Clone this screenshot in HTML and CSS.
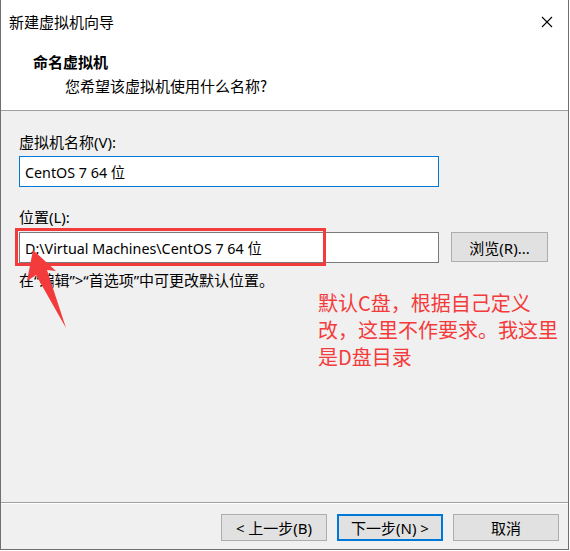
FILE: index.html
```html
<!DOCTYPE html>
<html lang="zh-CN">
<head>
    <meta charset="UTF-8">
    <meta name="viewport" content="width=device-width, initial-scale=1.0">
    <title>新建虚拟机向导</title>
    <link rel="stylesheet" href="styles.css">
</head>
<body>
    <div class="wizard">
        <div class="title-bar">
            <span class="title-text">新建虚拟机向导</span>
            <svg class="close-btn" width="12" height="12" viewBox="0 0 12 12">
                <path d="M1 1 L11 11 M11 1 L1 11" stroke="#000" stroke-width="1.1" fill="none"/>
            </svg>
        </div>
        <div class="wizard-header">
            <div class="step-title">命名虚拟机</div>
            <div class="step-desc">您希望该虚拟机使用什么名称?</div>
        </div>

        <div class="wizard-body">
            <label class="field-label" for="vm-name">虚拟机名称(V):</label>
            <input class="text-input focused" id="vm-name" type="text" value="CentOS 7 64 位">

            <label class="field-label second" for="vm-path">位置(L):</label>
            <div class="path-row">
                <input class="text-input" id="vm-path" type="text" value="D:\Virtual Machines\CentOS 7 64 位">
                <button class="btn browse-btn">浏览(R)...</button>
            </div>
            <div class="hint">在“编辑”>“首选项”中可更改默认位置。</div>

            <!-- 截图上的标注 -->
            <div class="mark-box"></div>
            <svg class="mark-arrow" width="80" height="100" viewBox="0 0 80 100">
                <polygon points="32,250 55,271 46,270 65,328 35,275 26,281" transform="translate(0,-240)" fill="#f33b3b"/>
            </svg>
            <div class="mark-note">默认C盘，根据自己定义<br>改，这里不作要求。我这里<br>是D盘目录</div>
        </div>

        <div class="wizard-footer">
            <button class="btn">&lt; 上一步(B)</button>
            <button class="btn default">下一步(N) &gt;</button>
            <button class="btn">取消</button>
        </div>
    </div>
</body>
</html>
```

FILE: styles.css
```css
* {
    box-sizing: border-box;
}
body {
    margin: 0;
    background: #fff;
    font-family: "Noto Sans", "Noto Sans CJK SC", sans-serif;
    font-size: 15px;
    color: #000;
}
.wizard {
    width: 569px;
    height: 550px;
    border: 1px solid #6f6f6f;
    border-top: none;
    display: flex;
    flex-direction: column;
    position: relative;
}
.title-bar {
    height: 44px;
    display: flex;
    align-items: center;
    justify-content: space-between;
    padding: 0 15px 0 8px;
    background: #fff;
}
.title-text {
    font-family: "Noto Sans CJK SC", sans-serif;
    line-height: 20px;
}
.close-btn {
    display: block;
}
.wizard-header {
    background: #fff;
    padding: 8px 0 0 32px;
    height: 67px;
    border-bottom: 1px solid #a0a0a0;
}
.step-title {
    font-family: "Noto Sans CJK SC", sans-serif;
    font-weight: bold;
    line-height: 20px;
}
.step-desc {
    font-family: "Noto Sans CJK SC", sans-serif;
    line-height: 20px;
    margin-top: 4px;
    padding-left: 32px;
}
.wizard-body {
    flex: 1;
    background: #f0f0f0;
    padding: 21px 0 0 18px;
    display: flex;
    flex-direction: column;
    align-items: flex-start;
}
.field-label {
    line-height: 20px;
    margin-bottom: 4px;
}
.field-label.second {
    margin-top: 20px;
    margin-bottom: 5px;
}
.text-input {
    width: 420px;
    height: 31px;
    border: 1px solid #7a7a7a;
    background: #fff;
    padding: 0 5px;
    font-family: inherit;
    font-size: 14.3px;
    color: #000;
    outline: none;
}
.text-input.focused {
    border-color: #0078d7;
}
.path-row {
    display: flex;
    gap: 12px;
    align-items: center;
}
.btn {
    height: 27px;
    width: 106px;
    border: 1px solid #adadad;
    background: #e1e1e1;
    font: inherit;
    color: #000;
    padding: 0;
}
.btn.default {
    border: 2px solid #0078d7;
}
.browse-btn {
    width: 97px;
    height: 30px;
    margin-top: -1px;
}
.hint {
    margin-top: 7px;
    line-height: 20px;
}
.mark-box {
    position: absolute;
    left: 14px;
    top: 228px;
    width: 311px;
    height: 38px;
    border: 3px solid #f33b3b;
}
.mark-arrow {
    position: absolute;
    left: 0;
    top: 240px;
}
.mark-note {
    position: absolute;
    left: 317px;
    top: 289px;
    font-family: "Noto Sans CJK SC", sans-serif;
    font-size: 20px;
    line-height: 27px;
    color: #f33b3b;
}
.wizard-footer {
    height: 47px;
    border-top: 1px solid #a0a0a0;
    box-shadow: inset 0 1px 0 #fff;
    background: #f0f0f0;
    display: flex;
    justify-content: flex-end;
    gap: 10px;
    padding: 11px 9px 0 0;
}
```
